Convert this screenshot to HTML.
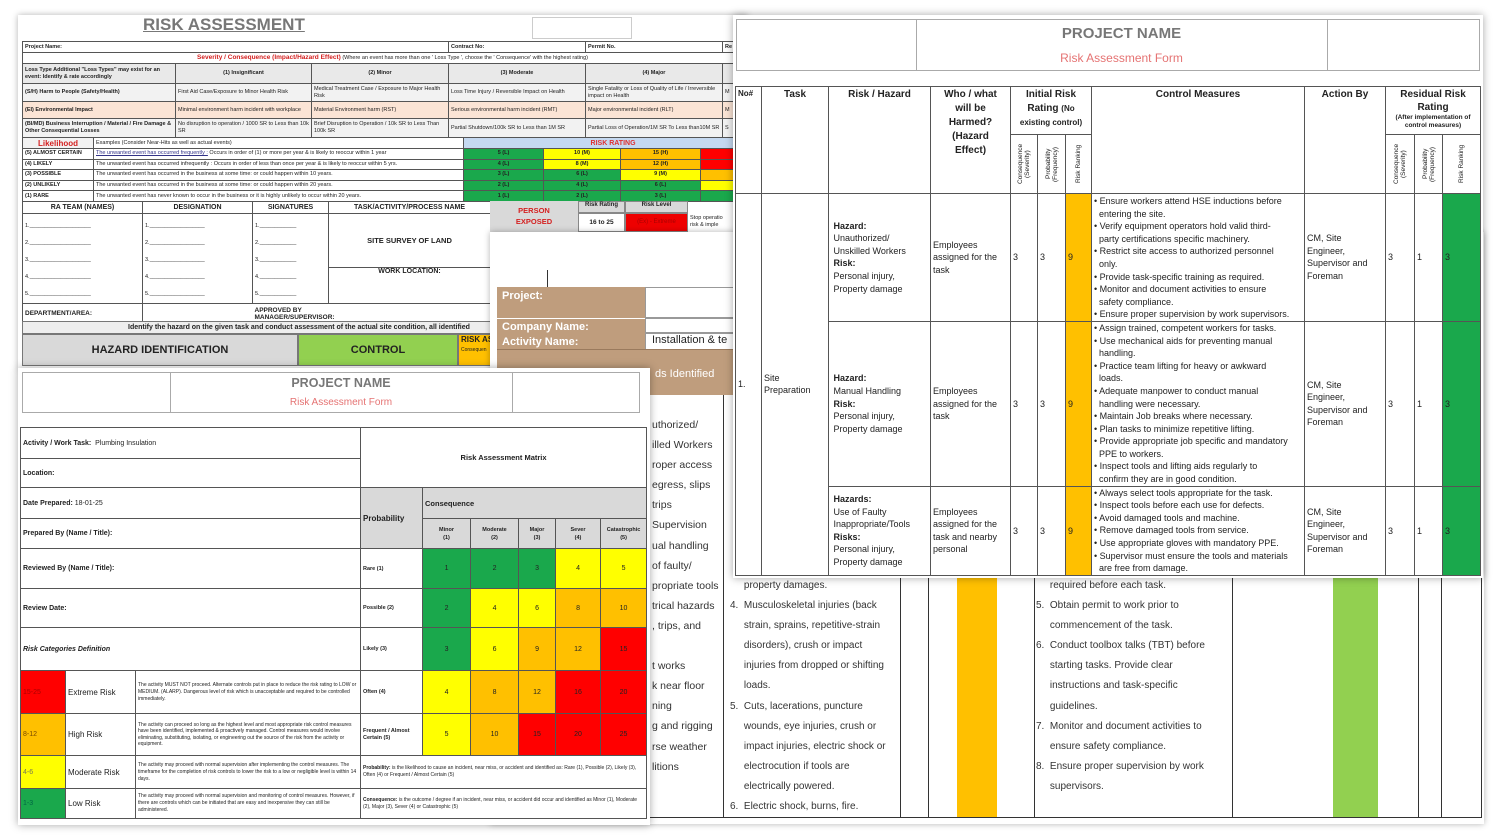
<!DOCTYPE html>
<html><head><meta charset="utf-8">
<style>
*{margin:0;padding:0;box-sizing:border-box}
body{width:1500px;height:839px;background:#fff;position:relative;overflow:hidden;font-family:"Liberation Sans",Arial,sans-serif;color:#222}
.a{position:absolute}
.sheet{position:absolute;background:#fff;overflow:hidden}
table{border-collapse:collapse;table-layout:fixed;position:absolute}
td{border:1px solid #555;overflow:hidden;padding:0 2px;vertical-align:middle;white-space:nowrap}
.g{background:#1aa84c}.y{background:#ffff00}.o{background:#ffc000}.r{background:#ff0000}
.t td{font-size:5.5px;line-height:7px}
.c{text-align:center}
.b{font-weight:bold}
.vt{padding:0}
.vt div{writing-mode:vertical-rl;transform:rotate(180deg);font-size:6.5px;text-align:center;white-space:normal;line-height:7px;height:56px;margin:0 auto}
</style></head><body>

<!-- TOP-LEFT SHEET -->
<div class="sheet" style="left:18px;top:15px;width:730px;height:355px;box-shadow:0 0 6px rgba(0,0,0,.3)">
 <div class="a b" style="left:125px;top:0px;font-size:17px;color:#777;text-decoration:underline">RISK ASSESSMENT</div>
 <div class="a" style="left:514px;top:2px;width:100px;height:22px;border:1px solid #ccc"></div>
 <table class="t" style="left:4px;top:26px;width:740px">
  <col style="width:153px"><col style="width:136px"><col style="width:137px"><col style="width:137px"><col style="width:137px"><col style="width:40px">
  <tr style="height:11px"><td colspan="3" class="b">Project Name:</td><td class="b">Contract No:</td><td class="b">Permit No.</td><td class="b">Re</td></tr>
  <tr style="height:11px"><td colspan="6" class="c"><b style="color:#d42020;font-size:6.5px">Severity / Consequence (Impact/Hazard Effect)</b> (Where an event has more than one ' Loss Type ', choose the ' Consequence' with the highest rating)</td></tr>
  <tr style="height:20px;background:#e9e9e9"><td class="b" style="white-space:normal">Loss Type Additional "Loss Types" may exist for an event: Identify &amp; rate accordingly</td><td class="c b">(1) Insignificant</td><td class="c b">(2) Minor</td><td class="c b">(3) Moderate</td><td class="c b">(4) Major</td><td></td></tr>
  <tr style="height:18px;background:#f2f2f2"><td class="b">(S/H) Harm to People (Safety/Health)</td><td>First Aid Case/Exposure to Minor Health Risk</td><td style="white-space:normal">Medical Treatment Case / Exposure to Major Health Risk</td><td style="white-space:normal">Loss Time Injury / Reversible Impact on Health</td><td style="white-space:normal">Single Fatality or Loss of Quality of Life / Irreversible impact on Health</td><td>M</td></tr>
  <tr style="height:17px;background:#fbe4d5"><td class="b">(EI) Environmental Impact</td><td style="white-space:normal">Minimal environment harm incident with workplace</td><td>Material Environment harm (RST)</td><td>Serious environmental harm incident (RMT)</td><td>Major environmental incident (RLT)</td><td>M</td></tr>
  <tr style="height:19px;background:#f2f2f2"><td class="b" style="white-space:normal">(BI/MD) Business Interruption / Material / Fire Damage &amp; Other Consequential Losses</td><td style="white-space:normal">No disruption to operation / 1000 SR to Less than 10k SR</td><td style="white-space:normal">Brief Disruption to Operation / 10k SR to Less Than 100k SR</td><td style="white-space:normal">Partial Shutdown/100k SR to Less than 1M SR</td><td style="white-space:normal">Partial Loss of Operation/1M SR To Less than10M SR</td><td>S</td></tr>
 </table>
 <table class="t" style="left:4px;top:122px;width:740px">
  <col style="width:71px"><col style="width:370px"><col style="width:80px"><col style="width:77px"><col style="width:80px"><col style="width:62px">
  <tr style="height:11px"><td class="b c" style="color:#d42020;font-size:8px;background:#f2f2f2">Likelihood</td><td>Examples (Consider Near-Hits as well as actual events)</td><td colspan="4" class="b c" style="background:#c5d9f1;color:#e03030;font-size:7px">RISK RATING</td></tr>
  <tr style="height:10.6px"><td class="b">(5) ALMOST CERTAIN</td><td><u style="color:#338">The unwanted event has occurred frequently :</u> Occurs in order of (1) or more per year &amp; is likely to reoccur within 1 year</td><td class="g c b">5 (L)</td><td class="y c b">10 (M)</td><td class="o c b">15 (H)</td><td class="r"></td></tr>
  <tr style="height:10.6px"><td class="b">(4) LIKELY</td><td>The unwanted event has occurred infrequently : Occurs in order of less than once per year &amp; is likely to reoccur within 5 yrs.</td><td class="g c b">4 (L)</td><td class="y c b">8 (M)</td><td class="o c b">12 (H)</td><td class="r"></td></tr>
  <tr style="height:10.6px"><td class="b">(3) POSSIBLE</td><td>The unwanted event has occurred in the business at some time: or could happen within 10 years.</td><td class="g c b">3 (L)</td><td class="g c b">6 (L)</td><td class="y c b">9 (M)</td><td class="o"></td></tr>
  <tr style="height:10.6px"><td class="b">(2) UNLIKELY</td><td>The unwanted event has occurred in the business at some time: or could happen within 20 years.</td><td class="g c b">2 (L)</td><td class="g c b">4 (L)</td><td class="g c b">6 (L)</td><td class="y"></td></tr>
  <tr style="height:10.6px"><td class="b">(1) RARE</td><td>The unwanted event has never known to occur in the business or it is highly unlikely to occur within 20 years.</td><td class="g c b">1 (L)</td><td class="g c b">2 (L)</td><td class="g c b">3 (L)</td><td class="g"></td></tr>
 </table>
 <table class="t" style="left:4px;top:186px;width:468px">
  <col style="width:120px"><col style="width:110px"><col style="width:76px"><col style="width:162px">
  <tr style="height:12px"><td class="b c" style="font-size:7px">RA TEAM (NAMES)</td><td class="b c" style="font-size:7px">DESIGNATION</td><td class="b c" style="font-size:7px">SIGNATURES</td><td class="b c" style="font-size:7px">TASK/ACTIVITY/PROCESS NAME</td></tr>
  <tr style="height:52px"><td rowspan="2" style="line-height:17px;vertical-align:top;padding-top:4px">1.____________________<br>2.____________________<br>3.____________________<br>4.____________________<br>5.____________________</td><td rowspan="2" style="line-height:17px;vertical-align:top;padding-top:4px">1.__________________<br>2.__________________<br>3.__________________<br>4.__________________<br>5.__________________</td><td rowspan="2" style="line-height:17px;vertical-align:top;padding-top:4px">1.____________<br>2.____________<br>3.____________<br>4.____________<br>5.____________</td><td class="b c" style="font-size:7.5px">SITE SURVEY OF LAND</td></tr>
  <tr style="height:35px"><td class="b c" style="vertical-align:top;font-size:7px">WORK LOCATION:</td></tr>
  <tr style="height:20px"><td class="b" style="font-size:6.5px">DEPARTMENT/AREA:</td><td style="border-right:none"></td><td colspan="2" class="b" style="font-size:6.5px;white-space:normal;border-left:none">APPROVED BY<br>MANAGER/SUPERVISOR:</td></tr>
 </table>
 <div class="a b" style="left:4px;top:306px;width:740px;height:13px;background:#eee;border:1px solid #777;font-size:7px;line-height:12px;padding-left:105px">Identify the hazard on the given task and conduct assessment of the actual site condition, all identified</div>
 <div class="a b c" style="left:4px;top:319px;width:276px;height:32px;background:#d9d9d9;border:1px solid #777;font-size:11px;line-height:30px">HAZARD IDENTIFICATION</div>
 <div class="a b c" style="left:280px;top:319px;width:160px;height:32px;background:#92d050;border:1px solid #777;font-size:11px;line-height:30px">CONTROL</div>
 <div class="a b" style="left:440px;top:319px;width:40px;height:32px;background:#ffc000;border:1px solid #777;font-size:8px;padding-left:2px">RISK AS<br><span style="font-size:5px;font-weight:normal">Consequen</span></div>
 <div class="a b c" style="left:472px;top:186px;width:88px;height:31px;background:#d9d9d9;color:#d42020;font-size:7.5px;line-height:11px;padding-top:4px">PERSON<br>EXPOSED</div>
 <div class="a b c" style="left:560px;top:186px;width:47px;height:12px;background:#d9d9d9;border:1px solid #888;font-size:6px">Risk Rating</div>
 <div class="a b c" style="left:560px;top:198px;width:47px;height:19px;border:1px solid #888;font-size:6.5px;line-height:17px">16 to 25</div>
 <div class="a b c" style="left:607px;top:186px;width:63px;height:12px;background:#d9d9d9;border:1px solid #888;font-size:6px">Risk Level</div>
 <div class="a c" style="left:607px;top:198px;width:63px;height:19px;background:#e00;border:1px solid #888;font-size:6px;line-height:17px;color:#a00">(Ex) - Extreme</div>
 <div class="a" style="left:670px;top:198px;width:60px;height:19px;font-size:5.5px;line-height:7px;padding:2px">Stop operatio<br>risk &amp; imple</div>
</div>

<!-- MIDDLE SHEET -->
<div class="sheet" style="left:490px;top:232px;width:994px;height:592px;box-shadow:0 0 6px rgba(0,0,0,.3)">
 <div class="a" style="left:57px;top:38px;width:1px;height:17px;background:#333"></div>
 <div class="a" style="left:7px;top:55px;width:238px;height:108px;background:#bf9d7d"></div>
 <div class="a b" style="left:12px;top:58px;color:#fff;font-size:11px">Project:</div>
 <div class="a" style="left:7px;top:86px;width:238px;height:1px;background:#fff"></div>
 <div class="a b" style="left:12px;top:89px;color:#fff;font-size:11px">Company Name:</div>
 <div class="a b" style="left:12px;top:104px;color:#fff;font-size:11px">Activity Name:</div>
 <div class="a" style="left:155px;top:55px;width:90px;height:31px;background:#fff;border:1px solid #999"></div>
 <div class="a" style="left:155px;top:86px;width:90px;height:15px;background:#fff;border:1px solid #999"></div>
 <div class="a" style="left:155px;top:101px;width:90px;height:17px;background:#fff;border:1px solid #999;font-size:11px;padding-left:6px;white-space:nowrap;overflow:hidden">Installation &amp; te</div>
 <div class="a" style="left:7px;top:117px;width:238px;height:1px;background:#9a7a5d"></div>
 <div class="a" style="left:165px;top:136px;color:#fff;font-size:11px">ds Identified</div>
 <div class="a" style="left:233px;top:163px;width:1px;height:422px;background:#333"></div>
 <div class="a" style="left:162px;top:183px;font-size:10.5px;line-height:20.1px;color:#333">uthorized/<br>illed Workers<br>roper access<br>egress, slips<br>trips<br>Supervision<br>ual handling<br>of faulty/<br>propriate tools<br>trical hazards<br>, trips, and<br><br>t works<br>k near floor<br>ning<br>g and rigging<br>rse weather<br>litions</div>
 <div class="a" style="left:410px;top:340px;width:1px;height:245px;background:#333"></div>
 <div class="a" style="left:438px;top:340px;width:1px;height:245px;background:#333"></div>
 <div class="a" style="left:467px;top:340px;width:40px;height:245px;background:#ffc000"></div>
 <div class="a" style="left:544px;top:340px;width:1px;height:245px;background:#333"></div>
 <div class="a" style="left:742px;top:340px;width:1px;height:245px;background:#333"></div>
 <div class="a" style="left:843px;top:340px;width:45px;height:245px;background:#92d050"></div>
 <div class="a" style="left:928px;top:340px;width:1px;height:245px;background:#333"></div>
 <div class="a" style="left:951px;top:340px;width:1px;height:245px;background:#333"></div>
 <div class="a" style="left:991px;top:0;width:1px;height:585px;background:#333"></div>
 <div class="a" style="left:0;top:585px;width:992px;height:1px;background:#333"></div>
 <div class="a" style="left:240px;top:344px;font-size:10px;line-height:20.1px;color:#333;white-space:nowrap">&nbsp;&nbsp;&nbsp;&nbsp;&nbsp;property damages.<br>4.&nbsp; Musculoskeletal injuries (back<br>&nbsp;&nbsp;&nbsp;&nbsp;&nbsp;strain, sprains, repetitive-strain<br>&nbsp;&nbsp;&nbsp;&nbsp;&nbsp;disorders), crush or impact<br>&nbsp;&nbsp;&nbsp;&nbsp;&nbsp;injuries from dropped or shifting<br>&nbsp;&nbsp;&nbsp;&nbsp;&nbsp;loads.<br>5.&nbsp; Cuts, lacerations, puncture<br>&nbsp;&nbsp;&nbsp;&nbsp;&nbsp;wounds, eye injuries, crush or<br>&nbsp;&nbsp;&nbsp;&nbsp;&nbsp;impact injuries, electric shock or<br>&nbsp;&nbsp;&nbsp;&nbsp;&nbsp;electrocution if tools are<br>&nbsp;&nbsp;&nbsp;&nbsp;&nbsp;electrically powered.<br>6.&nbsp; Electric shock, burns, fire.</div>
 <div class="a" style="left:546px;top:344px;font-size:10px;line-height:20.1px;color:#333;white-space:nowrap">&nbsp;&nbsp;&nbsp;&nbsp;&nbsp;required before each task.<br>5.&nbsp; Obtain permit to work prior to<br>&nbsp;&nbsp;&nbsp;&nbsp;&nbsp;commencement of the task.<br>6.&nbsp; Conduct toolbox talks (TBT) before<br>&nbsp;&nbsp;&nbsp;&nbsp;&nbsp;starting tasks. Provide clear<br>&nbsp;&nbsp;&nbsp;&nbsp;&nbsp;instructions and task-specific<br>&nbsp;&nbsp;&nbsp;&nbsp;&nbsp;guidelines.<br>7.&nbsp; Monitor and document activities to<br>&nbsp;&nbsp;&nbsp;&nbsp;&nbsp;ensure safety compliance.<br>8.&nbsp; Ensure proper supervision by work<br>&nbsp;&nbsp;&nbsp;&nbsp;&nbsp;supervisors.</div>
</div>

<!-- BOTTOM-LEFT SHEET -->
<div class="sheet" style="left:18px;top:368px;width:632px;height:457px;box-shadow:0 0 8px rgba(0,0,0,.35)">
 <div class="a" style="left:4px;top:4px;width:618px;height:41px;border:1px solid #aaa"></div>
 <div class="a" style="left:152px;top:4px;width:1px;height:41px;background:#aaa"></div>
 <div class="a" style="left:494px;top:4px;width:1px;height:41px;background:#aaa"></div>
 <div class="a b c" style="left:152px;top:8px;width:342px;font-size:12.5px;color:#777">PROJECT NAME</div>
 <div class="a c" style="left:152px;top:29px;width:342px;font-size:10px;color:#e57373">Risk Assessment Form</div>
 <table style="left:2px;top:59px;width:626px">
  <col style="width:45px"><col style="width:70px"><col style="width:225px"><col style="width:62px"><col style="width:48px"><col style="width:48px"><col style="width:37px"><col style="width:45px"><col style="width:46px">
  <tr style="height:31px"><td colspan="3" style="font-size:7px"><b>Activity / Work Task:</b>&nbsp; Plumbing Insulation</td><td colspan="6" rowspan="2" class="b c" style="font-size:7.5px">Risk Assessment Matrix</td></tr>
  <tr style="height:29px"><td colspan="3" class="b" style="font-size:7px">Location:</td></tr>
  <tr style="height:31px"><td colspan="3" class="b" style="font-size:7px">Date Prepared: <span style="font-weight:normal">18-01-25</span></td><td rowspan="2" class="b" style="background:#d9d9d9;font-size:8px">Probability</td><td colspan="5" class="b" style="background:#d9d9d9;font-size:7.5px">Consequence</td></tr>
  <tr style="height:30px;font-size:5.5px"><td colspan="3" class="b" style="font-size:7px">Prepared By (Name / Title):</td><td class="c b" style="background:#d9d9d9;font-size:5.5px;line-height:8px">Minor<br>(1)</td><td class="c b" style="background:#d9d9d9;font-size:5.5px;line-height:8px">Moderate<br>(2)</td><td class="c b" style="background:#d9d9d9;font-size:5.5px;line-height:8px">Major<br>(3)</td><td class="c b" style="background:#d9d9d9;font-size:5.5px;line-height:8px">Sever<br>(4)</td><td class="c b" style="background:#d9d9d9;font-size:5.5px;line-height:8px">Catastrophic<br>(5)</td></tr>
  <tr style="height:40px;font-size:7px"><td colspan="3" class="b">Reviewed By (Name / Title):</td><td class="b" style="font-size:5.5px">Rare (1)</td><td class="g c">1</td><td class="g c">2</td><td class="g c">3</td><td class="y c">4</td><td class="y c">5</td></tr>
  <tr style="height:39px;font-size:7px"><td colspan="3" class="b">Review Date:</td><td class="b" style="font-size:5.5px">Possible (2)</td><td class="g c">2</td><td class="y c">4</td><td class="y c">6</td><td class="o c">8</td><td class="o c">10</td></tr>
  <tr style="height:43px;font-size:7px"><td colspan="3" class="b"><i>Risk Categories Definition</i></td><td class="b" style="font-size:5.5px">Likely (3)</td><td class="g c">3</td><td class="y c">6</td><td class="o c">9</td><td class="o c">12</td><td class="r c">15</td></tr>
  <tr style="height:43px;font-size:7px"><td class="r" style="color:#a00">15-25</td><td style="font-size:8px">Extreme Risk</td><td style="font-size:5px;line-height:7px;white-space:normal">The activity MUST NOT proceed. Alternate controls put in place to reduce the risk rating to LOW or MEDIUM. (ALARP). Dangerous level of risk which is unacceptable and required to be controlled immediately.</td><td class="b" style="font-size:5.5px">Often (4)</td><td class="y c">4</td><td class="o c">8</td><td class="o c">12</td><td class="r c">16</td><td class="r c">20</td></tr>
  <tr style="height:42px;font-size:7px"><td class="o" style="color:#7a4a00">8-12</td><td style="font-size:8px">High Risk</td><td style="font-size:5px;line-height:6.5px;white-space:normal">The activity can proceed so long as the highest level and most appropriate risk control measures have been identified, implemented &amp; proactively managed. Control measures would involve eliminating, substituting, isolating, or engineering out the source of the risk from the activity or equipment.</td><td class="b" style="font-size:5.5px;white-space:normal;line-height:7px">Frequent / Almost Certain (5)</td><td class="y c">5</td><td class="o c">10</td><td class="r c">15</td><td class="r c">20</td><td class="r c">25</td></tr>
  <tr style="height:33px;font-size:7px"><td class="y" style="color:#775">4-6</td><td style="font-size:8px">Moderate Risk</td><td style="font-size:5px;line-height:7px;white-space:normal">The activity may proceed with normal supervision after implementing the control measures. The timeframe for the completion of risk controls to lower the risk to a low or negligible level is within 14 days.</td><td colspan="6" style="font-size:5px;line-height:7px;white-space:normal"><b>Probability:</b> is the likelihood to cause an incident, near miss, or accident and identified as: Rare (1), Possible (2), Likely (3), Often (4) or Frequent / Almost Certain (5)</td></tr>
  <tr style="height:30px;font-size:7px"><td class="g" style="color:#064">1-3</td><td style="font-size:8px">Low Risk</td><td style="font-size:5px;line-height:7px;white-space:normal">The activity may proceed with normal supervision and monitoring of control measures. However, if there are controls which can be initiated that are easy and inexpensive they can still be administered.</td><td colspan="6" style="font-size:5px;line-height:7px;white-space:normal"><b>Consequence:</b> is the outcome / degree if an incident, near miss, or accident did occur and identified as Minor (1), Moderate (2), Major (3), Sever (4) or Catastrophic (5)</td></tr>
 </table>
</div>

<!-- RIGHT-TOP SHEET -->
<div class="sheet" style="left:733px;top:15px;width:750px;height:563px;box-shadow:0 0 8px rgba(0,0,0,.35)">
 <div class="a" style="left:3px;top:4px;width:744px;height:52px;border:1px solid #aaa"></div>
 <div class="a" style="left:183px;top:4px;width:1px;height:52px;background:#aaa"></div>
 <div class="a" style="left:594px;top:4px;width:1px;height:52px;background:#aaa"></div>
 <div class="a b c" style="left:183px;top:10px;width:411px;font-size:15px;color:#777">PROJECT NAME</div>
 <div class="a c" style="left:183px;top:36px;width:411px;font-size:12px;color:#e57373">Risk Assessment Form</div>
 <table style="left:2px;top:71px;width:745px;font-size:9px">
  <col style="width:26px"><col style="width:67px"><col style="width:102px"><col style="width:80px"><col style="width:27px"><col style="width:28px"><col style="width:26px"><col style="width:213px"><col style="width:81px"><col style="width:29px"><col style="width:28px"><col style="width:38px">
  <tr style="height:48px"><td rowspan="2" class="b" style="vertical-align:top;font-size:8px;padding-top:2px">No#</td><td rowspan="2" class="b c" style="vertical-align:top;font-size:10px;padding-top:2px">Task</td><td rowspan="2" class="b c" style="vertical-align:top;font-size:10px;padding-top:2px">Risk / Hazard</td><td rowspan="2" class="b c" style="vertical-align:top;font-size:10px;line-height:14px;padding-top:1px">Who / what<br>will be<br>Harmed?<br>(Hazard<br>Effect)</td><td colspan="3" class="b c" style="font-size:10px;line-height:14px;vertical-align:top;padding-top:1px">Initial Risk<br>Rating <span style="font-size:8px">(No</span><br><span style="font-size:8px">existing control)</span></td><td rowspan="2" class="b c" style="vertical-align:top;font-size:10px;padding-top:2px">Control Measures</td><td rowspan="2" class="b c" style="vertical-align:top;font-size:10px;padding-top:2px">Action By</td><td colspan="3" class="b c" style="font-size:10px;line-height:13px;white-space:normal;vertical-align:top;padding-top:1px">Residual Risk Rating<br><span style="font-size:6.5px;line-height:8px;display:block">(After implementation of control measures)</span></td></tr>
  <tr style="height:59px"><td class="vt"><div>Consequence (Severity)</div></td><td class="vt"><div>Probability (Frequency)</div></td><td class="vt"><div>Risk Ranking</div></td><td class="vt"><div>Consequence (Severity)</div></td><td class="vt"><div>Probability (Frequency)</div></td><td class="vt"><div>Risk Ranking</div></td></tr>
  <tr style="height:126px"><td rowspan="3">1.</td><td rowspan="3" style="white-space:normal;line-height:12.6px">Site Preparation</td>
   <td style="line-height:12.6px">&nbsp;<b>Hazard:</b><br>&nbsp;Unauthorized/<br>&nbsp;Unskilled Workers<br>&nbsp;<b>Risk:</b><br>&nbsp;Personal injury,<br>&nbsp;Property damage</td>
   <td style="line-height:12.6px">Employees<br>assigned for the<br>task</td><td>3</td><td>3</td><td class="o">9</td>
   <td style="line-height:12.6px;white-space:nowrap;vertical-align:top;padding-top:1px">• Ensure workers attend HSE inductions before<br>&nbsp;&nbsp;entering the site.<br>• Verify equipment operators hold valid third-<br>&nbsp;&nbsp;party certifications specific machinery.<br>• Restrict site access to authorized personnel<br>&nbsp;&nbsp;only.<br>• Provide task-specific training as required.<br>• Monitor and document activities to ensure<br>&nbsp;&nbsp;safety compliance.<br>• Ensure proper supervision by work supervisors.</td>
   <td style="line-height:12.6px">CM, Site<br>Engineer,<br>Supervisor and<br>Foreman</td><td>3</td><td>1</td><td class="g">3</td></tr>
  <tr style="height:164px">
   <td style="line-height:12.6px">&nbsp;<b>Hazard:</b><br>&nbsp;Manual Handling<br>&nbsp;<b>Risk:</b><br>&nbsp;Personal injury,<br>&nbsp;Property damage</td>
   <td style="line-height:12.6px">Employees<br>assigned for the<br>task</td><td>3</td><td>3</td><td class="o">9</td>
   <td style="line-height:12.6px;vertical-align:top">• Assign trained, competent workers for tasks.<br>• Use mechanical aids for preventing manual<br>&nbsp;&nbsp;handling.<br>• Practice team lifting for heavy or awkward<br>&nbsp;&nbsp;loads.<br>• Adequate manpower to conduct manual<br>&nbsp;&nbsp;handling were necessary.<br>• Maintain Job breaks where necessary.<br>• Plan tasks to minimize repetitive lifting.<br>• Provide appropriate job specific and mandatory<br>&nbsp;&nbsp;PPE to workers.<br>• Inspect tools and lifting aids regularly to<br>&nbsp;&nbsp;confirm they are in good condition.</td>
   <td style="line-height:12.6px">CM, Site<br>Engineer,<br>Supervisor and<br>Foreman</td><td>3</td><td>1</td><td class="g">3</td></tr>
  <tr style="height:89px">
   <td style="line-height:12.6px">&nbsp;<b>Hazards:</b><br>&nbsp;Use of Faulty<br>&nbsp;Inappropriate/Tools<br>&nbsp;<b>Risks:</b><br>&nbsp;Personal injury,<br>&nbsp;Property damage</td>
   <td style="line-height:12.6px">Employees<br>assigned for the<br>task and nearby<br>personal</td><td>3</td><td>3</td><td class="o">9</td>
   <td style="line-height:12.6px;vertical-align:top">• Always select tools appropriate for the task.<br>• Inspect tools before each use for defects.<br>• Avoid damaged tools and machine.<br>• Remove damaged tools from service.<br>• Use appropriate gloves with mandatory PPE.<br>• Supervisor must ensure the tools and materials<br>&nbsp;&nbsp;are free from damage.</td>
   <td style="line-height:12.6px">CM, Site<br>Engineer,<br>Supervisor and<br>Foreman</td><td>3</td><td>1</td><td class="g">3</td></tr>
 </table>
</div>
</body></html>
